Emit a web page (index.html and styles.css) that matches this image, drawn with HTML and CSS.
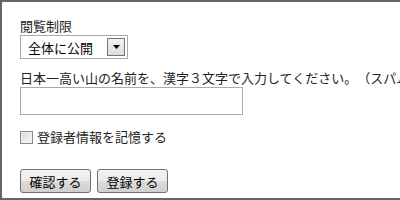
FILE: index.html
```html
<!DOCTYPE html>
<html lang="ja">
<head>
    <meta charset="UTF-8">
    <title>登録</title>
    <link rel="stylesheet" href="styles.css">
</head>
<body>
    <div class="form-box">
        <p class="field-label">閲覧制限</p>
        <div class="select-wrap">
            <select class="scope-select">
                <option>全体に公開</option>
                <option>登録者のみ</option>
            </select>
            <span class="select-arrow">
                <svg width="7" height="4" viewBox="0 0 7 4"><polygon points="0,0 7,0 3.5,4" fill="#000"/></svg>
            </span>
        </div>
        <p class="question">日本一高い山の名前を、漢字３文字で入力してください。（スパム対策）</p>
        <input type="text" class="answer-input">
        <label class="remember">
            <input type="checkbox" class="remember-check">
            <span>登録者情報を記憶する</span>
        </label>
        <div class="buttons">
            <button class="form-button">確認する</button>
            <button class="form-button">登録する</button>
        </div>
    </div>
</body>
</html>
```

FILE: styles.css
```css
body {
    margin: 0;
    background: #fff;
    font-family: "Noto Sans CJK JP", "Noto Sans", sans-serif;
    font-size: 13px;
    color: #222;
    overflow: hidden;
    text-spacing-trim: space-all;
}
.form-box {
    box-sizing: border-box;
    width: 600px;
    height: 200px;
    border: 2px solid #666;
    border-right: none;
    padding: 16px 0 0 18px;
}
.field-label, .question {
    margin: 0;
    line-height: 16px;
    white-space: nowrap;
}
.select-wrap {
    position: relative;
    width: 108px;
    height: 24px;
    margin-top: 1px;
}
.scope-select {
    appearance: none;
    -webkit-appearance: none;
    box-sizing: border-box;
    width: 108px;
    height: 24px;
    border: 1px solid #aaa;
    border-radius: 0;
    background: #fff;
    padding: 0 0 0 7px;
    font-family: inherit;
    font-size: 13px;
    color: #000;
}
.select-arrow {
    position: absolute;
    right: 3px;
    top: 3px;
    box-sizing: border-box;
    width: 18px;
    height: 18px;
    border: 1px solid #777;
    background: linear-gradient(#f4f4f4, #dcdcdc);
    display: flex;
    align-items: center;
    justify-content: center;
    pointer-events: none;
}
.question {
    margin-top: 11px;
}
.answer-input {
    display: block;
    box-sizing: border-box;
    width: 223px;
    height: 28px;
    margin: 1px 0 0 0;
    border: 1px solid #aaa;
    border-radius: 0;
}
.remember {
    display: flex;
    align-items: center;
    gap: 4px;
    margin-top: 14px;
    line-height: 16px;
}
.remember-check {
    appearance: none;
    -webkit-appearance: none;
    box-sizing: border-box;
    width: 13px;
    height: 13px;
    margin: 0;
    border: 1px solid #8a8a8a;
    background: linear-gradient(135deg, #d6d6d6, #fafafa);
    box-shadow: inset 0 0 0 1px #eee;
}
.buttons {
    display: flex;
    gap: 6px;
    margin-top: 24px;
}
.form-button {
    box-sizing: border-box;
    width: 71px;
    height: 24px;
    padding: 0;
    border: 1px solid #707070;
    border-radius: 3px;
    background: linear-gradient(#f3f3f3 0%, #ebebeb 50%, #dddddd 51%, #cfcfcf 100%);
    font-family: inherit;
    font-size: 13px;
    color: #000;
}
```
